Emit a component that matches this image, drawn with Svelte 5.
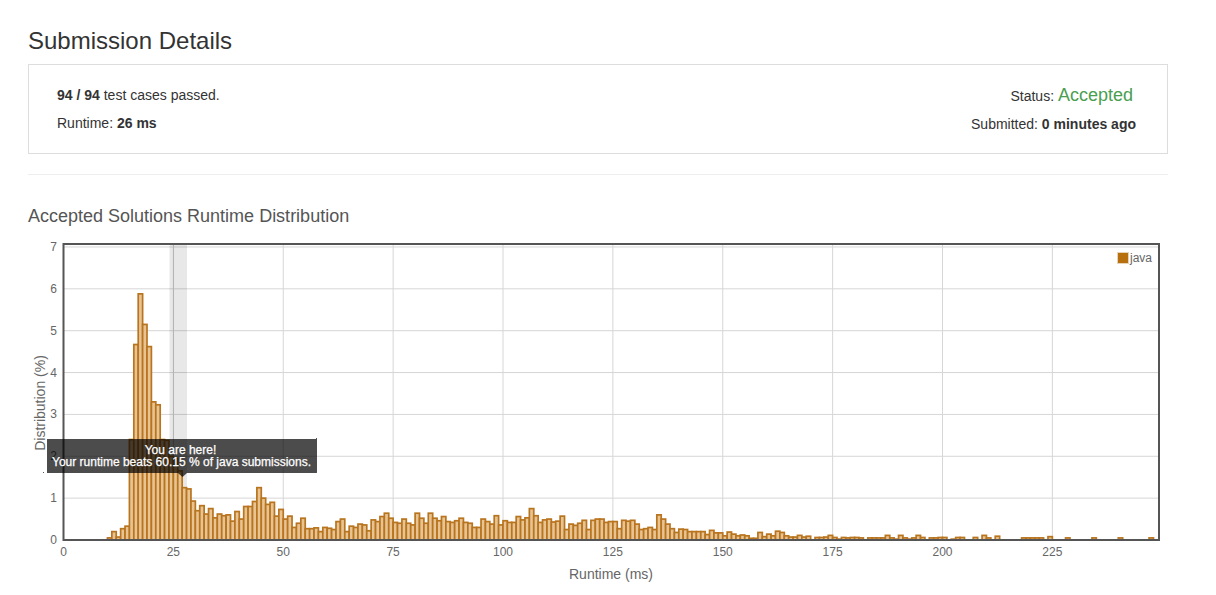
<script>
  // runtime distribution, one value per ms starting at 10ms
  const values = [
    0.05, 0.2, 0.07, 0.27, 0.33, 2.4, 4.67, 5.88, 5.15, 4.62,
    3.3, 3.23, 2.4, 2.38, 2.0, 1.95, 1.65, 1.25, 1.22, 0.93,
    0.7, 0.82, 0.62, 0.75, 0.53, 0.62, 0.58, 0.6, 0.45, 0.68,
    0.5, 0.8, 0.8, 0.92, 1.25, 1.0, 0.85, 0.9, 0.57, 0.73,
    0.5, 0.57, 0.3, 0.4, 0.52, 0.27, 0.27, 0.29, 0.2, 0.3,
    0.28, 0.25, 0.44, 0.5, 0.2, 0.33, 0.3, 0.38, 0.36, 0.22,
    0.48, 0.44, 0.56, 0.64, 0.52, 0.42, 0.4, 0.5, 0.4, 0.36,
    0.64, 0.52, 0.4, 0.64, 0.52, 0.46, 0.56, 0.44, 0.42, 0.46,
    0.52, 0.42, 0.4, 0.3, 0.3, 0.5, 0.44, 0.38, 0.58, 0.36,
    0.46, 0.42, 0.42, 0.56, 0.48, 0.53, 0.75, 0.58, 0.42, 0.48,
    0.5, 0.43, 0.45, 0.57, 0.25, 0.38, 0.35, 0.4, 0.47, 0.25,
    0.47, 0.5, 0.5, 0.42, 0.44, 0.44, 0.27, 0.47, 0.45, 0.47,
    0.38, 0.25, 0.27, 0.3, 0.25, 0.6, 0.5, 0.38, 0.27, 0.18,
    0.26, 0.25, 0.2, 0.2, 0.2, 0.2, 0.13, 0.23, 0.17, 0.17,
    0.1, 0.19, 0.14, 0.1, 0.12, 0.1, 0.04, 0.04, 0.18, 0.08,
    0.14, 0.1, 0.21, 0.18, 0.1, 0.07, 0.07, 0.11, 0.07, 0.09,
    0, 0.06, 0.06, 0.07, 0.11, 0.06, 0.02, 0.06, 0.05, 0.06,
    0.06, 0.05, 0, 0.05, 0.05, 0.05, 0.05, 0.11, 0.05, 0.02,
    0.11, 0.05, 0.02, 0.05, 0.11, 0.06, 0, 0.05, 0.05, 0.06,
    0.06, 0, 0.02, 0.06, 0.06, 0, 0, 0.06, 0, 0.11,
    0.05, 0, 0.09, 0, 0, 0, 0, 0, 0.05, 0.05,
    0.05, 0.05, 0.05, 0, 0.08, 0, 0, 0, 0.05, 0,
    0, 0, 0, 0, 0.05, 0, 0, 0, 0, 0,
    0.05, 0, 0, 0, 0, 0, 0, 0.05
  ];

  const left = 63.5;
  const right = 1159;
  const top = 244;
  const bottom = 540;
  const xStep = 4.395;
  const yStep = 41.86;

  const xTicks = [0, 25, 50, 75, 100, 125, 150, 175, 200, 225];
  const yTicks = [0, 1, 2, 3, 4, 5, 6, 7];

  const bars = values
    .map((v, i) => ({ x: left + (i + 10) * xStep, h: v * yStep }))
    .filter((b) => b.h > 0);
</script>

<div class="page">
  <h1>Submission Details</h1>

  <div class="card">
    <div class="col">
      <p><b>94 / 94</b> test cases passed.</p>
      <p>Runtime: <b>26 ms</b></p>
    </div>
    <div class="col right">
      <p class="status">Status: <span class="accepted">Accepted</span></p>
      <p>Submitted: <b>0 minutes ago</b></p>
    </div>
  </div>

  <hr />

  <h2>Accepted Solutions Runtime Distribution</h2>

  <svg class="chart" viewBox="28 232 1140 363" width="1140" height="363">
    {#each yTicks as t}
      <line class="grid" x1={left} x2={right} y1={bottom - t * yStep} y2={bottom - t * yStep} />
      <text class="tick" x="57" y={bottom - t * yStep + 4} text-anchor="end">{t}</text>
    {/each}
    {#each xTicks as t}
      {#if t > 0}
        <line class="grid" x1={left + t * xStep} x2={left + t * xStep} y1={top} y2={bottom} />
      {/if}
      <text class="tick" x={left + t * xStep} y="556" text-anchor="middle">{t}</text>
    {/each}

    <rect class="band" x="169.5" y={top} width="17.5" height={bottom - top} />
    <line class="band-line" x1="173.500" x2="173.500" y1={top} y2={bottom} />

    {#each bars as b}
      <rect class="bar" x={b.x} y={bottom - b.h} width={xStep} height={b.h} />
    {/each}

    <rect class="frame" x={left} y={top} width={right - left} height={bottom - top} />

    <rect class="legend-box" x="1117.5" y="252.5" width="11" height="11" />
    <text class="tick" x="1130" y="262">java</text>

    <text class="axis" x="611" y="579" text-anchor="middle">Runtime (ms)</text>
    <text class="axis" transform="translate(45 403) rotate(-90)" text-anchor="middle">Distribution (%)</text>

    <rect class="tip" x="47" y="439" width="270" height="34" />
    <path class="tip" d="M178 473h9l-4.500 4z" />
    <rect class="dot" x="43" y="472" width="1" height="1" />
    <rect class="dot" x="316" y="438" width="1" height="1" />
    <rect class="dot" x="316" y="472" width="1" height="1" />
    <text class="tip-text" x="180.500" y="454" text-anchor="middle">You are here!</text>
    <text class="tip-text" x="181.500" y="466" text-anchor="middle">Your runtime beats 60.15 % of java submissions.</text>
  </svg>
</div>

<style>
  :global(body) {
    background: #fff;
  }

  .page {
    padding: 24px 48px 0 28px;
    font-family: "Liberation Sans", Arial, sans-serif;
    font-size: 14px;
    color: #333;
  }

  h1 {
    margin: 0 0 6px;
    font-size: 24px;
    font-weight: 400;
    line-height: 34px;
  }

  .card {
    display: flex;
    justify-content: space-between;
    padding: 20px 31px 19px 28px;
    border: 1px solid #ddd;
  }

  .col p {
    margin: 0;
    line-height: 20px;
  }

  .col p + p {
    margin-top: 8px;
  }

  .right {
    text-align: right;
  }

  .status {
    padding-right: 3px;
  }

  .accepted {
    font-size: 18px;
    color: #4a9e50;
  }

  hr {
    height: 1px;
    margin: 20px 0 28px;
    border: 0;
    background: #eee;
  }

  h2 {
    margin: 0 0 3px;
    font-size: 18px;
    font-weight: 400;
    line-height: 26px;
    color: #555;
  }

  .chart {
    display: block;
  }

  .grid {
    stroke: #d6d6d6;
    stroke-width: 1;
  }

  .tick {
    font-size: 12px;
    fill: #666;
  }

  .axis {
    font-size: 14px;
    fill: #666;
  }

  .band {
    fill: rgba(0, 0, 0, 0.09);
  }

  .band-line {
    stroke: #b4b4b4;
    stroke-width: 1;
  }

  .bar {
    fill: #e8c493;
    stroke: #b8741f;
    stroke-width: 1.7;
  }

  .frame {
    fill: none;
    stroke: #555;
    stroke-width: 2;
  }

  .legend-box {
    fill: #b8700f;
    stroke: #e6d3b8;
    stroke-width: 1;
  }

  .tip {
    fill: rgba(0, 0, 0, 0.7);
  }

  .dot {
    fill: #555;
  }

  .tip-text {
    font-size: 12px;
    fill: #fff;
    stroke: #fff;
    stroke-width: 0.25;
  }
</style>
